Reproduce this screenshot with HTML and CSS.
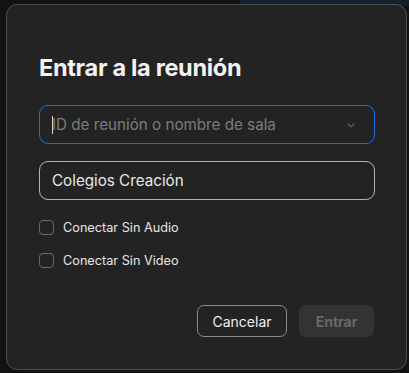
FILE: index.html
```html
<!DOCTYPE html>
<html lang="es">
<head>
<meta charset="utf-8">
<link rel="stylesheet" href="styles.css">
</head>
<body>
<div class="backdrop-top"></div>
<div class="dialog">
  <h1 class="title">Entrar a la reunión</h1>
  <div class="field field-active">
    <span class="caret"></span>
    <span class="placeholder">ID de reunión o nombre de sala</span>
    <svg class="chevron" width="8" height="5" viewBox="0 0 8 5"><path d="M1 1 L4 3.8 L7 1" fill="none" stroke="#5e5e5e" stroke-width="1.2" stroke-linecap="round" stroke-linejoin="round"/></svg>
  </div>
  <div class="field field-name">
    <span class="value">Colegios Creación</span>
  </div>
  <div class="options">
    <label class="option"><span class="box"></span><span>Conectar Sin Audio</span></label>
    <label class="option"><span class="box"></span><span>Conectar Sin Video</span></label>
  </div>
  <div class="actions">
    <button class="btn btn-cancel">Cancelar</button>
    <button class="btn btn-join">Entrar</button>
  </div>
</div>
</body>
</html>
```
FILE: styles.css
```css
* { box-sizing: border-box; }
html, body { margin: 0; padding: 0; }
body {
  width: 409px;
  height: 373px;
  background: #121212;
  font-family: "Inter", "Liberation Sans", sans-serif;
  position: relative;
  overflow: hidden;
  padding: 4px 0 0 6px;
}
.backdrop-top {
  position: absolute;
  left: 240px;
  top: 0;
  width: 169px;
  height: 6px;
  background: #14202c;
}
.dialog {
  position: relative;
  width: 401px;
  height: 366px;
  background: #232323;
  border: 1px solid #4e4e4e;
  border-radius: 11px;
  padding: 49px 32px 0 32px;
  display: flex;
  flex-direction: column;
}
.title {
  margin: 0;
  font-size: 23.5px;
  font-weight: 700;
  color: #f2f2f2;
  line-height: 28px;
  letter-spacing: -0.3px;
}
.field {
  margin-top: 23px;
  height: 39px;
  width: 336px;
  border-radius: 9px;
  display: flex;
  align-items: center;
  padding: 0 12px;
  font-size: 15.2px;
}
.field-active {
  border: 1px solid #1c6fe8;
  position: relative;
}
.caret {
  width: 1px;
  height: 18px;
  background: #d8d8d8;
  margin-right: -1px;
}
.placeholder {
  color: #7c7c7c;
  flex: 1;
}
.chevron { margin-right: 7px; margin-top: 2px; }
.field-name {
  margin-top: 17px;
  border: 1px solid #b4b2bc;
}
.value { color: #e8e8e8; }
.options {
  margin-top: 20px;
  display: flex;
  flex-direction: column;
  gap: 18px;
}
.option {
  display: flex;
  align-items: center;
  gap: 9px;
  font-size: 12.7px;
  color: #e6e6e6;
  height: 15px;
}
.box {
  width: 15px;
  height: 15px;
  border: 1px solid #6a6a6a;
  border-radius: 4px;
}
.actions {
  margin-top: 37px;
  display: flex;
  justify-content: flex-end;
  gap: 12px;
}
.btn {
  font-family: inherit;
  height: 32px;
  border-radius: 7px;
  font-size: 14px;
  padding: 0;
}
.btn-cancel {
  width: 90px;
  background: #232323;
  border: 1px solid #8a8a8a;
  color: #f0f0f0;
}
.btn-join {
  width: 75px;
  background: #333333;
  border: none;
  color: #686868;
  font-weight: 700;
}
```
